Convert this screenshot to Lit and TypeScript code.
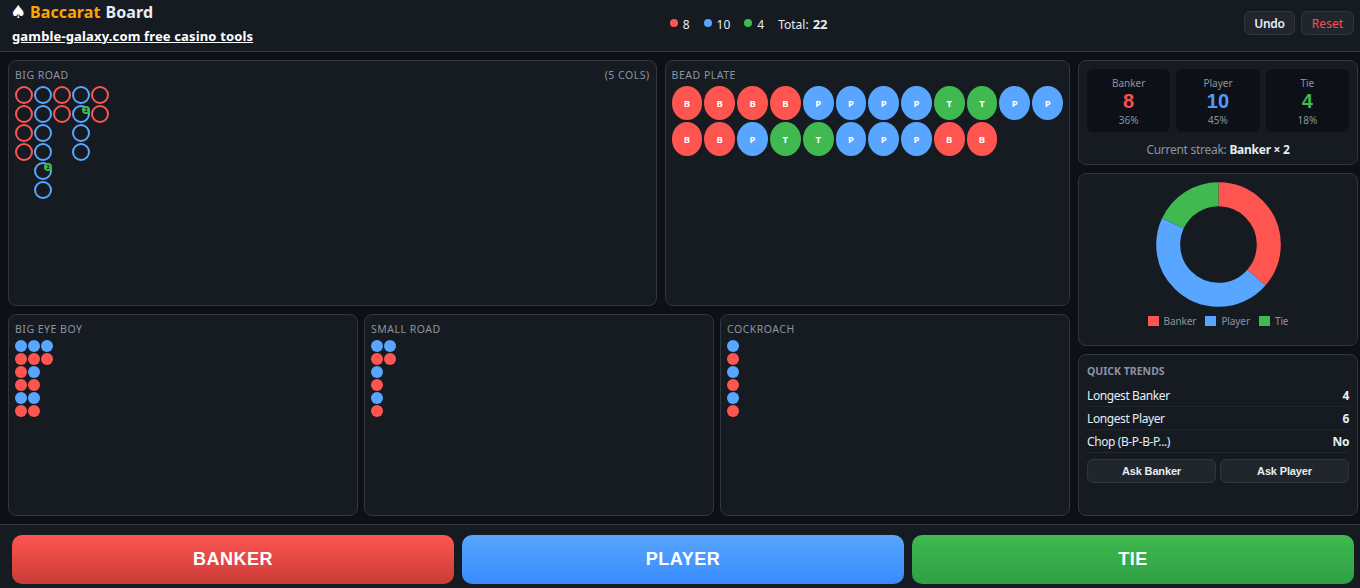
import { LitElement, html, css, svg } from "lit";
import { customElement } from "lit/decorators.js";

const C: Record<string, string> = { B: "red", P: "blue", T: "green" };

const bigRoad: { k: string; badge?: number }[][] = [
  [{ k: "B" }, { k: "B" }, { k: "B" }, { k: "B" }],
  [{ k: "P" }, { k: "P" }, { k: "P" }, { k: "P" }, { k: "P", badge: 2 }, { k: "P" }],
  [{ k: "B" }, { k: "B" }],
  [{ k: "P" }, { k: "P", badge: 2 }, { k: "P" }, { k: "P" }],
  [{ k: "B" }, { k: "B" }],
];
const beads = "BBBBPPPPTTPPBBPTTPPPBB".split("");
const derived = [
  { title: "BIG EYE BOY", cols: ["PRRRPR", "PRPRPR", "PR"] },
  { title: "SMALL ROAD", cols: ["PRPRPR", "PR"] },
  { title: "COCKROACH", cols: ["PRPRPR"] },
];
const donut = [
  { cls: "s-red", v: 8 },
  { cls: "s-blue", v: 10 },
  { cls: "s-green", v: 4 },
];

@customElement("app-root")
export class AppRoot extends LitElement {
  static styles = css`
    :host {
      display: flex;
      flex-direction: column;
      height: 588px;
      overflow: hidden;
      background: #0d1117;
      color: #e6edf3;
      font-family: "Noto Sans", sans-serif;
    }
    * { box-sizing: border-box; }
    header {
      height: 52px;
      flex: none;
      display: flex;
      justify-content: space-between;
      align-items: center;
      padding: 0 6px 0 12px;
      background: #161b22;
      border-bottom: 1px solid #30363d;
    }
    .brand { display: flex; flex-direction: column; align-items: flex-start; }
    .title { display: flex; align-items: baseline; font-size: 16px; line-height: 22px; font-weight: 700; margin-top: -6px; letter-spacing: 0.1px; }
    .title .spade { font-size: 18px; line-height: 22px; width: 18px; margin-left: -2px; margin-right: 2px; font-family: "DejaVu Sans", sans-serif; font-weight: 400; color: #fff; }
    .title em { font-style: normal; color: #ffa500; margin-right: 5px; }
    .link { font-size: 13px; line-height: 18px; font-weight: 700; color: #fff; text-decoration: underline; margin-top: 4px; letter-spacing: 0.15px; }
    .totals { display: flex; align-items: center; font-size: 12px; margin-top: -3px; }
    .tot { display: flex; align-items: center; gap: 5px; margin-right: 14px; }
    .dot { width: 8px; height: 8px; border-radius: 50%; margin-top: -2px; }
    .totals b { font-size: 13px; font-weight: 700; }
    .totals .sum { display: flex; gap: 4px; align-items: baseline; }
    .actions { display: flex; justify-content: flex-end; gap: 6px; margin-top: -5px; }
    .btn {
      height: 24px;
      width: 51px;
      padding: 0;
      border-radius: 6px;
      background: #21262d;
      border: 1px solid #30363d;
      color: #e6edf3;
      font: 600 12px "Noto Sans", sans-serif;
      letter-spacing: -0.3px;
    }
    .btn.danger { width: 53px; color: #ff4d4d; font-weight: 400; letter-spacing: 0.1px; }
    main {
      flex: 1;
      min-height: 0;
      display: grid;
      grid-template-columns: 1fr 280px;
      gap: 8px;
      padding: 8px 2px 8px 8px;
    }
    .left { display: grid; grid-template-rows: 246px 202px; gap: 8px; min-width: 0; }
    .top { display: grid; grid-template-columns: 1.6fr 1fr; gap: 8px; min-width: 0; }
    .bottom { display: grid; grid-template-columns: repeat(3, 1fr); gap: 6px; min-width: 0; }
    .panel {
      background: #161b22;
      border: 1px solid #30363d;
      border-radius: 8px;
      padding: 7px 6px 6px;
      min-width: 0;
    }
    .label {
      display: flex;
      justify-content: space-between;
      font-size: 10.5px;
      line-height: 14px;
      letter-spacing: 0.5px;
      color: #8b949e;
      margin-bottom: 4px;
    }
    .road { display: flex; gap: 1px; }
    .rcol { display: flex; flex-direction: column; gap: 1px; }
    .ring { position: relative; width: 18px; height: 18px; border-radius: 50%; border: 2px solid; }
    .ring.red { border-color: #ff5551; }
    .ring.blue { border-color: #58a6ff; }
    .badge {
      position: absolute;
      top: -1px;
      right: -2px;
      width: 8px;
      height: 8px;
      border-radius: 50%;
      background: #3fb950;
      color: #0d1117;
      font-size: 6px;
      line-height: 8px;
      font-weight: 700;
      text-align: center;
    }
    .beads { display: grid; grid-template-columns: repeat(12, 1fr); grid-auto-rows: 34px; gap: 2px; }
    .bead {
      border-radius: 50%;
      display: flex;
      align-items: center;
      justify-content: center;
      color: #fff;
      font-size: 9.5px;
      font-weight: 700;
    }
    .bead.red, .pip.R, .dot.red { background: #ff5551; }
    .bead.blue, .pip.P, .dot.blue { background: #58a6ff; }
    .bead.green, .dot.green { background: #3fb950; }
    .mini { display: flex; gap: 1px; }
    .mcol { display: flex; flex-direction: column; gap: 1px; }
    .pip { width: 12px; height: 12px; border-radius: 50%; }
    .right { display: flex; flex-direction: column; gap: 8px; min-width: 0; }
    .stats { padding: 8px; height: 105px; }
    .cells { display: grid; grid-template-columns: repeat(3, 1fr); gap: 6px; }
    .cell {
      height: 63px;
      background: #0d1117;
      border-radius: 6px;
      text-align: center;
      padding-top: 6.5px;
    }
    .cell small { display: block; font-size: 10px; line-height: 14px; color: #8b949e; }
    .cell strong { display: block; font: 700 20px/23px "Liberation Sans", Arial, sans-serif; }
    .cell span { display: block; font-size: 10px; line-height: 14px; color: #8b949e; }
    .cell .red { color: #ff4d4d; }
    .cell .blue { color: #4d9bff; }
    .cell .green { color: #3fb950; }
    .streak { text-align: center; font-size: 12px; line-height: 16px; color: #8b949e; margin-top: 10px; letter-spacing: -0.27px; }
    .streak b { color: #e6edf3; font-weight: 700; }
    .chart { height: 173px; padding: 8px; display: flex; flex-direction: column; align-items: center; }
    .chart svg { display: block; flex: none; }
    .legend { display: flex; gap: 9px; margin-top: 7px; font-size: 10px; line-height: 14px; color: #8b949e; letter-spacing: -0.1px; }
    .legend div { display: flex; align-items: center; gap: 5px; }
    .legend i { width: 11px; height: 10px; display: block; }
    .legend i.red { background: #ff5551; }
    .legend i.blue { background: #58a6ff; }
    .legend i.green { background: #3fb950; }
    .s-red { stroke: #ff5551; }
    .s-blue { stroke: #58a6ff; }
    .s-green { stroke: #3fb950; }
    .trends { flex: 1; padding: 8px; }
    .trends h4 { margin: 0 0 5px; font-size: 10.5px; line-height: 16px; font-weight: 700; color: #8b949e; }
    .trow {
      display: flex;
      justify-content: space-between;
      align-items: center;
      height: 23px;
      font-size: 12px;
      letter-spacing: -0.4px;
      border-bottom: 1px solid #21262d;
    }
    .trow b { font-weight: 700; }
    .asks { display: grid; grid-template-columns: 1fr 1fr; gap: 4px; margin-top: 6px; }
    .ask {
      height: 24px;
      border-radius: 6px;
      background: #21262d;
      border: 1px solid #30363d;
      color: #e6edf3;
      font: 700 11px "Liberation Sans", Arial, sans-serif;
      letter-spacing: -0.15px;
    }
    footer {
      height: 64px;
      flex: none;
      display: grid;
      grid-template-columns: repeat(3, 1fr);
      gap: 8px;
      padding: 10px 6px 4px 12px;
      background: #161b22;
      border-top: 1px solid #30363d;
    }
    .bet {
      border: 0;
      border-radius: 10px;
      color: #fff;
      font: 700 18px "Liberation Sans", Arial, sans-serif;
      letter-spacing: 0.5px;
    }
    .bet.red { background: linear-gradient(180deg, #ff5551, #c93c37); }
    .bet.blue { background: linear-gradient(180deg, #58a6ff, #388bfd); }
    .bet.green { background: linear-gradient(180deg, #3fb950, #2ea043); }
  `;

  private donut() {
    const r = 50.3;
    const circ = 2 * Math.PI * r;
    const total = donut.reduce((a, d) => a + d.v, 0);
    let off = 0;
    const arcs = donut.map((d) => {
      const len = (d.v / total) * circ;
      const el = svg`<circle class=${d.cls} cx="62.5" cy="62.5" r=${r} fill="none" stroke-width="24"
        stroke-dasharray="${len} ${circ - len}" stroke-dashoffset=${-off}
        transform="rotate(-90 62.5 62.5)"></circle>`;
      off += len;
      return el;
    });
    return html`<svg width="125" height="125" viewBox="0 0 125 125">${arcs}</svg>`;
  }

  render() {
    return html`
      <header>
        <div class="brand">
          <div class="title"><span class="spade">♠</span><em>Baccarat</em>Board</div>
          <a class="link">gamble-galaxy.com free casino tools</a>
        </div>
        <div class="totals">
          <div class="tot"><span class="dot red"></span>8</div>
          <div class="tot"><span class="dot blue"></span>10</div>
          <div class="tot"><span class="dot green"></span>4</div>
          <div class="sum">Total: <b>22</b></div>
        </div>
        <div class="actions">
          <button class="btn">Undo</button>
          <button class="btn danger">Reset</button>
        </div>
      </header>
      <main>
        <div class="left">
          <div class="top">
            <section class="panel">
              <div class="label"><span>BIG ROAD</span><span>(5 COLS)</span></div>
              <div class="road">
                ${bigRoad.map(
                  (col) => html`<div class="rcol">
                    ${col.map(
                      (c) => html`<div class="ring ${C[c.k]}">
                        ${c.badge ? html`<span class="badge">${c.badge}</span>` : ""}
                      </div>`
                    )}
                  </div>`
                )}
              </div>
            </section>
            <section class="panel">
              <div class="label"><span>BEAD PLATE</span></div>
              <div class="beads">
                ${beads.map((b) => html`<div class="bead ${C[b]}">${b}</div>`)}
              </div>
            </section>
          </div>
          <div class="bottom">
            ${derived.map(
              (d) => html`<section class="panel">
                <div class="label"><span>${d.title}</span></div>
                <div class="mini">
                  ${d.cols.map(
                    (col) => html`<div class="mcol">
                      ${col.split("").map((p) => html`<div class="pip ${p}"></div>`)}
                    </div>`
                  )}
                </div>
              </section>`
            )}
          </div>
        </div>
        <div class="right">
          <section class="panel stats">
            <div class="cells">
              <div class="cell"><small>Banker</small><strong class="red">8</strong><span>36%</span></div>
              <div class="cell"><small>Player</small><strong class="blue">10</strong><span>45%</span></div>
              <div class="cell"><small>Tie</small><strong class="green">4</strong><span>18%</span></div>
            </div>
            <div class="streak">Current streak: <b>Banker × 2</b></div>
          </section>
          <section class="panel chart">
            ${this.donut()}
            <div class="legend">
              <div><i class="red"></i>Banker</div>
              <div><i class="blue"></i>Player</div>
              <div><i class="green"></i>Tie</div>
            </div>
          </section>
          <section class="panel trends">
            <h4>QUICK TRENDS</h4>
            <div class="trow"><span>Longest Banker</span><b>4</b></div>
            <div class="trow"><span>Longest Player</span><b>6</b></div>
            <div class="trow"><span>Chop (B-P-B-P...)</span><b>No</b></div>
            <div class="asks">
              <button class="ask">Ask Banker</button>
              <button class="ask">Ask Player</button>
            </div>
          </section>
        </div>
      </main>
      <footer>
        <button class="bet red">BANKER</button>
        <button class="bet blue">PLAYER</button>
        <button class="bet green">TIE</button>
      </footer>
    `;
  }
}
